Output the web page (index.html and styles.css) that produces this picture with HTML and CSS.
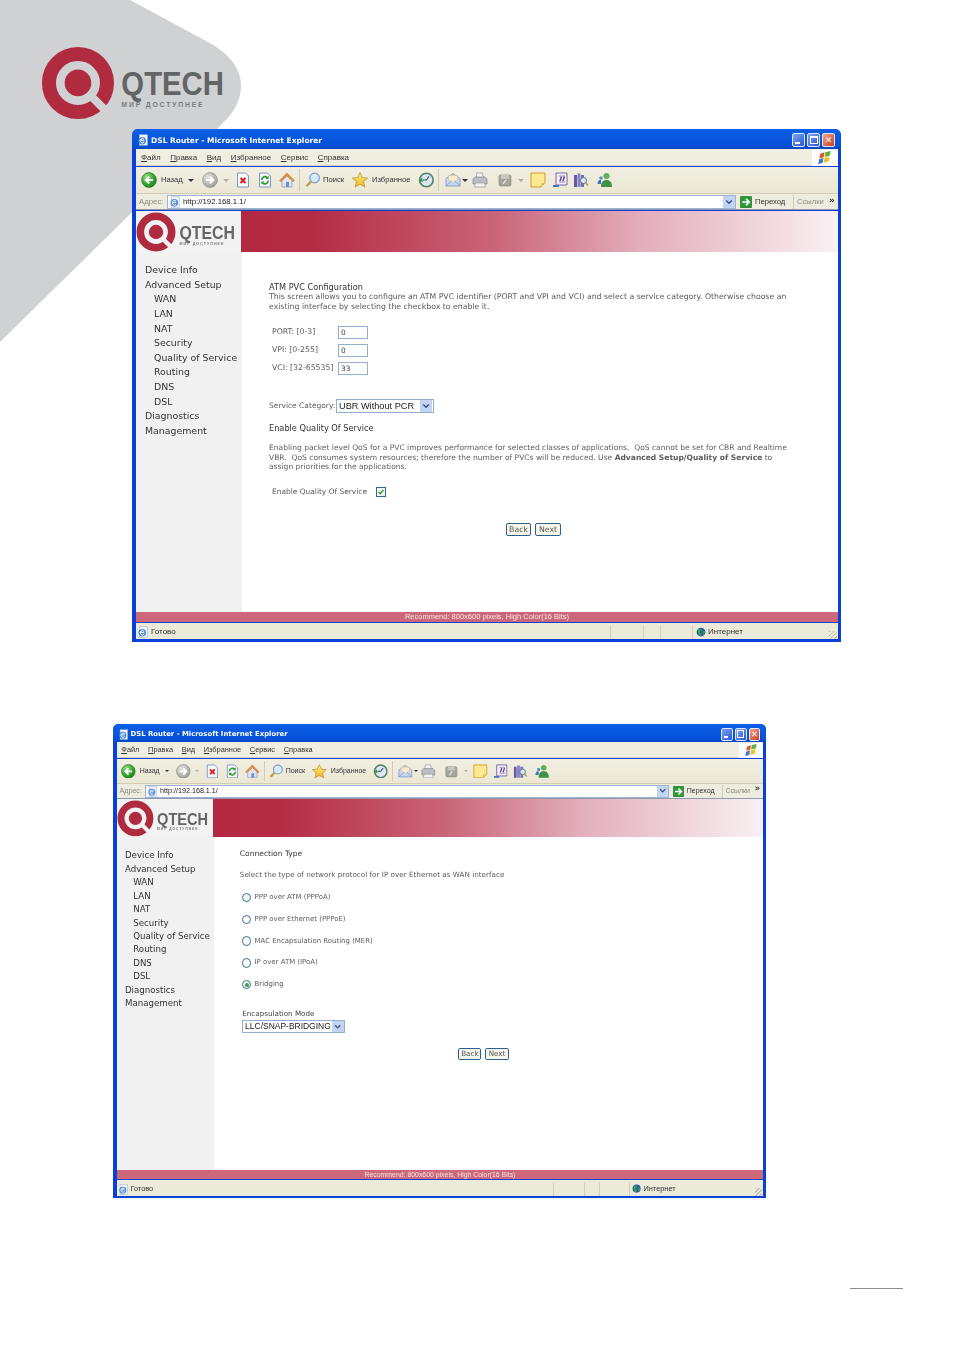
FILE: index.html
```html
<!DOCTYPE html>
<html lang="en">
<head>
<meta charset="utf-8">
<title>DSL Router manual page</title>
<link rel="stylesheet" href="styles.css">
</head>
<body>
<svg class="defs" aria-hidden="true">
  <defs>
    <radialGradient id="gGreen" cx=".35" cy=".3" r=".8"><stop offset="0" stop-color="#9be08a"/><stop offset=".55" stop-color="#3aa832"/><stop offset="1" stop-color="#1c7a1e"/></radialGradient>
    <radialGradient id="gGray" cx=".35" cy=".3" r=".8"><stop offset="0" stop-color="#e4e4df"/><stop offset="1" stop-color="#9a9a94"/></radialGradient>
    <linearGradient id="gStar" x1="0" y1="0" x2="0" y2="1"><stop offset="0" stop-color="#fff08a"/><stop offset="1" stop-color="#eeb422"/></linearGradient>
    <symbol id="logo" viewBox="0 0 105 41">
      <circle cx="20" cy="21" r="15.7" fill="none" stroke="#b02a40" stroke-width="7.6"/>
      <circle cx="20" cy="21" r="7.2" fill="#b02a40"/>
      <path d="M27 28 L38 39" stroke="currentColor" stroke-width="4.4" fill="none"/>
      <text x="43.5" y="27.8" class="logo-q" textLength="55.500" lengthAdjust="spacingAndGlyphs">QTECH</text>
      <text x="43.5" y="34" class="logo-s" textLength="44" lengthAdjust="spacing">МИР ДОСТУПНЕЕ</text>
    </symbol>
    <symbol id="i-back" viewBox="0 0 16 16"><circle cx="8" cy="8" r="7.4" fill="url(#gGreen)" stroke="#1f7a22" stroke-width=".7"/><path d="M12 8H5.5M8.2 4.6 4.8 8l3.4 3.4" fill="none" stroke="#fff" stroke-width="2"/></symbol>
    <symbol id="i-fwd" viewBox="0 0 16 16"><circle cx="8" cy="8" r="7.4" fill="url(#gGray)" stroke="#8c8c86" stroke-width=".7"/><path d="M4 8h6.5M7.8 4.6 11.2 8l-3.4 3.4" fill="none" stroke="#fff" stroke-width="2"/></symbol>
    <symbol id="i-stop" viewBox="0 0 16 16"><path d="M2.5 1h8l3 3v11h-11z" fill="#f6f8fd" stroke="#7e97c8"/><path d="M5.5 6l5 5M10.5 6l-5 5" stroke="#d8211a" stroke-width="2"/></symbol>
    <symbol id="i-refresh" viewBox="0 0 16 16"><path d="M2.5 1h8l3 3v11h-11z" fill="#f6f8fd" stroke="#7e97c8"/><path d="M4.8 8a3.3 3.3 0 0 1 5.8-2.2M11.2 8.5a3.3 3.3 0 0 1-5.8 2.2" fill="none" stroke="#2c9e2f" stroke-width="1.7"/><path d="M11.6 3.6v3.3H8.4zM4.4 12.6V9.4h3.2z" fill="#2c9e2f"/></symbol>
    <symbol id="i-home" viewBox="0 0 16 16"><path d="M3 8v7h10V8L8 3.5z" fill="#dfe6f2" stroke="#8896b4" stroke-width=".7"/><path d="M.6 8.6 8 1l7.4 7.6-1.4 1L8 3.7 2 9.6z" fill="#e8923a" stroke="#b8651e" stroke-width=".5"/><path d="M7 10h3v5H7z" fill="#6d8fd0"/></symbol>
    <symbol id="i-search" viewBox="0 0 16 16"><path d="M6 9.6 1.6 14" stroke="#c99a3e" stroke-width="2.4"/><circle cx="9.6" cy="6" r="4.8" fill="#d6e8fb" stroke="#7f9cc6" stroke-width="1.2"/><path d="M7 5a3 3 0 0 1 3-2" stroke="#fff" fill="none"/></symbol>
    <symbol id="i-star" viewBox="0 0 16 16"><path d="M8 .6l2.2 5 5.4.5-4.1 3.6 1.3 5.4L8 12.2l-4.8 2.9 1.3-5.4L.4 6.1l5.4-.5z" fill="url(#gStar)" stroke="#b88a1c" stroke-width=".7"/></symbol>
    <symbol id="i-hist" viewBox="0 0 16 16"><circle cx="8.4" cy="8" r="6.8" fill="#dbe6ef" stroke="#4d7f62" stroke-width="1.6"/><path d="M8.4 8 11 4.4M8.4 8H5" stroke="#36506e" stroke-width="1.1"/><path d="M.6 9 4 5.6 5 10z" fill="#2f9e36"/></symbol>
    <symbol id="i-mail" viewBox="0 0 16 16"><path d="M1 6.5 8 1.5l7 5V14H1z" fill="#c8d8f2" stroke="#7b93c0" stroke-width=".8"/><path d="M3.5 7.5V3.5h9v4L8 10.5z" fill="#f8eccd" stroke="#d6b88a" stroke-width=".5"/><path d="M1 14l5.5-5M15 14 9.5 9" stroke="#7b93c0" stroke-width=".8"/></symbol>
    <symbol id="i-print" viewBox="0 0 16 16"><path d="M4.5 1h6l1 5h-7z" fill="#f3f3f3" stroke="#9a9a9a" stroke-width=".7"/><path d="M1 7l2-2h10l2 2v5H1z" fill="#b9bec6" stroke="#7c828c" stroke-width=".7"/><path d="M3.5 11h9l1 4h-11z" fill="#f2f2f2" stroke="#9a9a9a" stroke-width=".7"/></symbol>
    <symbol id="i-edit" viewBox="0 0 16 16"><rect x="2" y="3" width="12" height="11" rx="1.5" fill="#a5a59c" stroke="#85857c" stroke-width=".6"/><path d="M4 3h8v4H4z" fill="#c6c6bd"/><path d="M6 12 9 8" stroke="#f0f0e8" stroke-width="1.2"/></symbol>
    <symbol id="i-note" viewBox="0 0 16 16"><path d="M1 1h14v10l-4 4H1z" fill="#fdea90" stroke="#d69a2a"/><path d="M15 11h-4v4z" fill="#e8c25a"/></symbol>
    <symbol id="i-one" viewBox="0 0 16 16"><path d="M4 1h11v12H4z" fill="#f1eef8" stroke="#7c64a8"/><path d="M7 4h6M7 10h6" stroke="#9c8cc0"/><path d="M8 9l1.5-4.5M11 9l1.5-4.5" stroke="#5c3e90" stroke-width="1.4"/><path d="M1 13h6v2H1z" fill="#3f74c8"/></symbol>
    <symbol id="i-books" viewBox="0 0 16 16"><path d="M1 3h3v12H1z" fill="#6a5aa8"/><path d="M4.5 1.5h3V15h-3z" fill="#8e7cc8"/><path d="M8 3h3v12H8z" fill="#5a7ab8"/><circle cx="10.5" cy="8.5" r="3" fill="#d6eaf8" stroke="#55708f"/><path d="M12.5 10.5l2.5 3" stroke="#c89a3e" stroke-width="1.7"/></symbol>
    <symbol id="i-msn" viewBox="0 0 16 16"><circle cx="9.5" cy="4" r="3" fill="#5fae5a"/><path d="M4 15c0-5 2-7 5.5-7S15 10 15 15z" fill="#3f9048"/><circle cx="4" cy="6" r="1.8" fill="#5b8ed8"/><path d="M.5 12c0-3 1.4-4.3 3.5-4.3L4 12z" fill="#3f74c8"/></symbol>
    <symbol id="i-flag" viewBox="0 0 16 16"><path d="M2.5 3 7.5 1.5 6.5 7 1.5 8.5z" fill="#e2572a"/><path d="M8.500 1.300 14.500 0l-1.200 5.500-5.700 1.300z" fill="#5eb43a"/><path d="M1.300 9.500 6.300 8 5.300 13.500.3 15z" fill="#3a78d8"/><path d="M7.400 7.900 13.100 6.600 12 12l-5.700 1.400z" fill="#f2c218"/></symbol>
    <symbol id="i-ie" viewBox="0 0 16 16"><rect x="3" y="1" width="11" height="14" fill="#eef3fb" stroke="#9bb0d0" stroke-width=".7"/><circle cx="7" cy="9" r="5" fill="#4d8ad8"/><path d="M4.5 8.5h5M9.5 11a3 3 0 1 1 0-4" fill="none" stroke="#fff" stroke-width="1.3"/></symbol>
    <symbol id="i-go" viewBox="0 0 16 16"><rect x=".5" y=".5" width="15" height="15" rx="1" fill="#2c9a36" stroke="#1a7426"/><path d="M3 8h8M8 3.8 12.2 8 8 12.200" fill="none" stroke="#fff" stroke-width="2.2"/></symbol>
    <symbol id="i-globe" viewBox="0 0 16 16"><circle cx="8" cy="8" r="7" fill="#2a54b8"/><path d="M4 3c3-1 5 0 5 2s-3 1-3 3 3 1 3 3-2 3-3 3-2-4-3-6 0-4 1-5zM11 6c2 0 3 1 3 3s-1 3-2 3-1-2-1-3z" fill="#3aa83a"/></symbol>
    <symbol id="i-chev" viewBox="0 0 8 8"><path d="M1.2 2.5 4 5.3l2.8-2.800" fill="none" stroke="#39548c" stroke-width="1.5"/></symbol>
  </defs>
</svg>

<svg class="swoosh" viewBox="0 0 242 343" aria-hidden="true"><path d="M0 0H130L208 42Q241 60 241 86Q241 106 222 124L0 342Z"/></svg>
<svg class="top-logo" aria-label="QTECH"><use href="#logo"/></svg>

<section class="win win-a">
  <header class="title">
    <svg class="ic-s"><use href="#i-ie"/></svg>
    <span class="title-text">DSL Router - Microsoft Internet Explorer</span>
    <span class="wbtn wmin"><i></i></span><span class="wbtn wmax"><i></i></span><span class="wbtn wclose">✕</span>
  </header>
  <nav class="menu">
    <span><u>Ф</u>айл</span><span><u>П</u>равка</span><span><u>В</u>ид</span><span><u>И</u>збранное</span><span><u>С</u>ервис</span><span><u>С</u>правка</span>
    <span class="flagbox"><svg class="ic-s"><use href="#i-flag"/></svg></span>
  </nav>
  <div class="toolbar">
    <svg class="ic"><use href="#i-back"/></svg><span class="lbl w21 ml4">Назад</span><span class="tri ml6"></span>
    <svg class="ic ml8"><use href="#i-fwd"/></svg><span class="tri dim ml5"></span>
    <svg class="ic ml6"><use href="#i-stop"/></svg><svg class="ic ml6"><use href="#i-refresh"/></svg><svg class="ic ml6"><use href="#i-home"/></svg>
    <span class="sep ml4"></span>
    <svg class="ic ml5"><use href="#i-search"/></svg><span class="lbl w21 ml2">Поиск</span>
    <svg class="ic ml8"><use href="#i-star"/></svg><span class="lbl w37 ml4">Избранное</span>
    <svg class="ic ml9"><use href="#i-hist"/></svg>
    <span class="sep ml4"></span>
    <svg class="ic ml6"><use href="#i-mail"/></svg><span class="tri ml1"></span>
    <svg class="ic ml4"><use href="#i-print"/></svg>
    <svg class="ic ml9"><use href="#i-edit"/></svg><span class="tri dim ml5"></span>
    <svg class="ic ml6"><use href="#i-note"/></svg><svg class="ic ml6"><use href="#i-one"/></svg><svg class="ic ml5"><use href="#i-books"/></svg><svg class="ic ml8"><use href="#i-msn"/></svg>
  </div>
  <div class="addr">
    <span class="addr-l">Адрес:</span>
    <div class="addr-box"><svg class="ic-s"><use href="#i-ie"/></svg><span class="url">http://192.168.1.1/</span><span class="drop"><svg class="chev"><use href="#i-chev"/></svg></span></div>
    <svg class="ic-s go"><use href="#i-go"/></svg><span class="go-l">Переход</span>
    <span class="sep2"></span><span class="links">Ссылки</span><span class="more">»</span>
  </div>
  <div class="band">
    <div class="band-logo"><svg class="logo-svg"><use href="#logo"/></svg></div>
    <div class="band-grad"></div>
  </div>
  <div class="body">
    <aside class="side">
      <a>Device Info</a><a>Advanced Setup</a><a class="sub">WAN</a><a class="sub">LAN</a><a class="sub">NAT</a><a class="sub">Security</a><a class="sub">Quality of Service</a><a class="sub">Routing</a><a class="sub">DNS</a><a class="sub">DSL</a><a>Diagnostics</a><a>Management</a>
    </aside>
    <main class="main main-a">
      <h2 class="hd">ATM PVC Configuration</h2>
      <p class="tx">This screen allows you to configure an ATM PVC identifier (PORT and VPI and VCI) and select a service category. Otherwise choose an<br>existing interface by selecting the checkbox to enable it.</p>
      <div class="rows">
        <div class="row"><span class="rl">PORT: [0-3]</span><div class="field">0</div></div>
        <div class="row"><span class="rl">VPI: [0-255]</span><div class="field">0</div></div>
        <div class="row"><span class="rl">VCI: [32-65535]</span><div class="field">33</div></div>
      </div>
      <div class="svc"><span class="svc-l">Service Category:</span><div class="sel sel-a"><span>UBR Without PCR</span><span class="drop"><svg class="chev"><use href="#i-chev"/></svg></span></div></div>
      <h2 class="hd hd2">Enable Quality Of Service</h2>
      <p class="tx tx2">Enabling packet level QoS for a PVC improves performance for selected classes of applications.&nbsp; QoS cannot be set for CBR and Realtime<br>VBR.&nbsp; QoS consumes system resources; therefore the number of PVCs will be reduced. Use <b>Advanced Setup/Quality of Service</b> to<br>assign priorities for the applications.</p>
      <div class="en"><span class="en-l">Enable Quality Of Service</span><span class="chk"><svg viewBox="0 0 10 10"><path d="M2 5l2 2.2L8 2.5" fill="none" stroke="#22a02a" stroke-width="1.6"/></svg></span></div>
      <div class="btns btns-a"><button class="btn">Back</button><button class="btn btn-n">Next</button></div>
    </main>
  </div>
  <div class="pink">Recommend: 800x600 pixels, High Color(16 Bits)</div>
  <footer class="status">
    <svg class="ic-s"><use href="#i-ie"/></svg><span class="st-t">Готово</span>
    <span class="cell c1"></span><span class="cell c2"></span><span class="cell c3"></span>
    <span class="cell zone"><svg class="ic-s"><use href="#i-globe"/></svg><span>Интернет</span></span>
    <span class="grip"></span>
  </footer>
</section>

<section class="win win-b">
  <header class="title">
    <svg class="ic-s"><use href="#i-ie"/></svg>
    <span class="title-text">DSL Router - Microsoft Internet Explorer</span>
    <span class="wbtn wmin"><i></i></span><span class="wbtn wmax"><i></i></span><span class="wbtn wclose">✕</span>
  </header>
  <nav class="menu">
    <span><u>Ф</u>айл</span><span><u>П</u>равка</span><span><u>В</u>ид</span><span><u>И</u>збранное</span><span><u>С</u>ервис</span><span><u>С</u>правка</span>
    <span class="flagbox"><svg class="ic-s"><use href="#i-flag"/></svg></span>
  </nav>
  <div class="toolbar">
    <svg class="ic"><use href="#i-back"/></svg><span class="lbl w21 ml4">Назад</span><span class="tri ml6"></span>
    <svg class="ic ml8"><use href="#i-fwd"/></svg><span class="tri dim ml5"></span>
    <svg class="ic ml6"><use href="#i-stop"/></svg><svg class="ic ml6"><use href="#i-refresh"/></svg><svg class="ic ml6"><use href="#i-home"/></svg>
    <span class="sep ml4"></span>
    <svg class="ic ml5"><use href="#i-search"/></svg><span class="lbl w21 ml2">Поиск</span>
    <svg class="ic ml8"><use href="#i-star"/></svg><span class="lbl w37 ml4">Избранное</span>
    <svg class="ic ml9"><use href="#i-hist"/></svg>
    <span class="sep ml4"></span>
    <svg class="ic ml6"><use href="#i-mail"/></svg><span class="tri ml1"></span>
    <svg class="ic ml4"><use href="#i-print"/></svg>
    <svg class="ic ml9"><use href="#i-edit"/></svg><span class="tri dim ml5"></span>
    <svg class="ic ml6"><use href="#i-note"/></svg><svg class="ic ml6"><use href="#i-one"/></svg><svg class="ic ml5"><use href="#i-books"/></svg><svg class="ic ml8"><use href="#i-msn"/></svg>
  </div>
  <div class="addr">
    <span class="addr-l">Адрес:</span>
    <div class="addr-box"><svg class="ic-s"><use href="#i-ie"/></svg><span class="url">http://192.168.1.1/</span><span class="drop"><svg class="chev"><use href="#i-chev"/></svg></span></div>
    <svg class="ic-s go"><use href="#i-go"/></svg><span class="go-l">Переход</span>
    <span class="sep2"></span><span class="links">Ссылки</span><span class="more">»</span>
  </div>
  <div class="band">
    <div class="band-logo"><svg class="logo-svg"><use href="#logo"/></svg></div>
    <div class="band-grad"></div>
  </div>
  <div class="body">
    <aside class="side">
      <a>Device Info</a><a>Advanced Setup</a><a class="sub">WAN</a><a class="sub">LAN</a><a class="sub">NAT</a><a class="sub">Security</a><a class="sub">Quality of Service</a><a class="sub">Routing</a><a class="sub">DNS</a><a class="sub">DSL</a><a>Diagnostics</a><a>Management</a>
    </aside>
    <main class="main main-b">
      <h2 class="hd">Connection Type</h2>
      <p class="tx tx-sel">Select the type of network protocol for IP over Ethernet as WAN interface</p>
      <div class="radios">
        <label class="radio"><span class="rb"></span>PPP over ATM (PPPoA)</label>
        <label class="radio"><span class="rb"></span>PPP over Ethernet (PPPoE)</label>
        <label class="radio"><span class="rb"></span>MAC Encapsulation Routing (MER)</label>
        <label class="radio"><span class="rb"></span>IP over ATM (IPoA)</label>
        <label class="radio"><span class="rb on"></span>Bridging</label>
      </div>
      <div class="enc">Encapsulation Mode</div>
      <div class="sel sel-b"><span>LLC/SNAP-BRIDGING</span><span class="drop"><svg class="chev"><use href="#i-chev"/></svg></span></div>
      <div class="btns btns-b"><button class="btn">Back</button><button class="btn btn-n">Next</button></div>
    </main>
  </div>
  <div class="pink">Recommend: 800x600 pixels, High Color(16 Bits)</div>
  <footer class="status">
    <svg class="ic-s"><use href="#i-ie"/></svg><span class="st-t">Готово</span>
    <span class="cell c1"></span><span class="cell c2"></span><span class="cell c3"></span>
    <span class="cell zone"><svg class="ic-s"><use href="#i-globe"/></svg><span>Интернет</span></span>
    <span class="grip"></span>
  </footer>
</section>

<div class="page-rule"></div>
</body>
</html>
```

FILE: styles.css
```css
* { box-sizing: border-box; }
html, body { margin: 0; padding: 0; background: #fff; }
body { position: relative; width: 955px; height: 1350px; overflow: hidden; font-family: "DejaVu Sans", sans-serif; }
.defs { position: absolute; width: 0; height: 0; }

.swoosh { position: absolute; left: 0; top: 0; width: 242px; height: 343px; fill: #cfd1d3; }
.top-logo { position: absolute; left: 41px; top: 44px; width: 194px; height: 76px; color: #cfd1d3; }
.logo-q { font: 700 17.5px "Liberation Sans", sans-serif; fill: #636466; }
.logo-s { font: 700 3.7px "Liberation Sans", sans-serif; fill: #7a7b7d; }

.win { position: absolute; width: 709px; display: flex; flex-direction: column; padding: 0 3px 3px 4px; border-radius: 6px 6px 0 0; background: #0a40d8; filter: blur(.45px); overflow: hidden; }
.win-a { left: 132px; top: 129px; height: 513px; }
.win-b { zoom: .921; left: 122.7px; top: 786.1px; height: 515px; }

.title { height: 20px; margin: 0 -3px 0 -4px; padding: 2px 5px 0; display: flex; align-items: center; flex: none; background: linear-gradient(#0a5fe8 0, #0a5ae0 30%, #0450d8 85%, #0b46c0 100%); }
.title-text { margin: 1px 0 0 2px; flex: 1; color: #fff; font: 700 7.5px/18px "DejaVu Sans", sans-serif; }
.ic-s { width: 12px; height: 12px; display: block; flex: none; }
.wbtn { width: 13px; height: 14px; margin-left: 2px; border: 1px solid #dfe8fb; border-radius: 2px; background: linear-gradient(135deg, #7ea2f0, #2c58d2); color: #fff; position: relative; display: flex; align-items: center; justify-content: center; font: 700 9px/1 "DejaVu Sans", sans-serif; }
.wmin i { position: absolute; left: 2px; bottom: 2px; width: 5px; height: 2px; background: #fff; }
.wmax i { width: 8px; height: 8px; border: 1px solid #fff; border-top-width: 2px; }
.wclose { margin-right: 1px; background: linear-gradient(135deg, #f0a58c, #c9401c); }

.menu { height: 17px; padding: 1px 0 0 5px; display: flex; align-items: center; gap: 9.5px; flex: none; background: #f0eee0; border-bottom: 1px solid #d8d4c0; font: 8px/16px "Liberation Sans", sans-serif; color: #333; }
.menu u { text-decoration: underline; }
.flagbox { margin-left: auto; width: 26px; height: 16px; background: #fff; display: flex; align-items: center; justify-content: center; }
.flagbox .ic-s { width: 14px; height: 14px; }

.toolbar { height: 27px; padding: 0 0 0 5px; margin-top: 1px; display: flex; align-items: center; flex: none; background: linear-gradient(#f1efe3, #ebe7d3); border-bottom: 1px solid #d2ceb8; }
.ic { width: 16px; height: 16px; display: block; flex: none; }
.lbl { flex: none; font: 7.6px/12px "Liberation Sans", sans-serif; color: #333; white-space: nowrap; }
.w21 { width: 21px; }
.w37 { width: 37px; }
.tri { flex: none; width: 0; height: 0; border: 3px solid transparent; border-top-color: #333; border-bottom-width: 0; }
.tri.dim { border-top-color: #b0ada0; }
.sep { flex: none; width: 1px; height: 22px; background: #cfcbb5; }
.ml1 { margin-left: 1px; }
.ml2 { margin-left: 2px; }
.ml4 { margin-left: 4px; }
.ml5 { margin-left: 5px; }
.ml6 { margin-left: 6px; }
.ml8 { margin-left: 8px; }
.ml9 { margin-left: 9px; }

.addr { height: 16px; padding-top: 1px; display: flex; align-items: center; flex: none; background: #eeecdf; border-bottom: 1px solid #8d99ad; font: 7.8px/14px "Liberation Sans", sans-serif; color: #333; }
.addr-l { width: 31px; padding-left: 3px; color: #8d8d85; }
.addr-box { width: 569px; height: 14px; padding-left: 1px; display: flex; align-items: center; background: #fff; border: 1px solid #9fb5d8; color: #222; }
.url { margin-left: 2px; flex: 1; font-size: 7.8px; }
.drop { width: 12px; height: 12px; flex: none; display: flex; align-items: center; justify-content: center; background: #c3d3f2; }
.chev { width: 8px; height: 8px; display: block; }
.go { margin-left: 4px; }
.go-l { margin-left: 3px; width: 38px; font-size: 7.6px; }
.sep2 { width: 1px; height: 14px; background: #cfcbb5; }
.links { margin-left: 3px; width: 32px; color: #8d8d85; font-size: 7.6px; }
.more { font: 700 9px/10px "DejaVu Sans", sans-serif; margin-top: -5px; }

.band { height: 41px; margin-top: 1px; display: flex; flex: none; background: #fff; }
.band-logo { width: 105px; height: 41px; color: #f2f2f2; background: #f2f2f2; flex: none; }
.logo-svg { width: 105px; height: 41px; display: block; }
.band-grad { flex: 1; background: linear-gradient(90deg, #b22840 0, #b42c44 12%, #c96478 42%, #e3aebb 67%, #f9f1f3 100%); }

.body { flex: 1; min-height: 0; display: flex; background: #fff; }
.side { width: 106px; flex: none; padding: 11px 0 0 9px; background: #f1f1f1; display: flex; flex-direction: column; }
.win-b .side { padding-top: 13px; }
.side a { height: 14.64px; font: 9.4px/14.64px "DejaVu Sans", sans-serif; color: #333; white-space: nowrap; }
.side .sub { padding-left: 9px; }

.main { flex: 1; min-width: 0; font: 7.75px/9.7px "DejaVu Sans", sans-serif; color: #5b5b5b; white-space: nowrap; }
.main-a { padding: 30px 20px 0 27px; }
.main-b { padding: 12.4px 20px 0 27.7px; }
.hd { margin: 0; font: 400 8.2px/10px "DejaVu Sans", sans-serif; color: #333; }
.tx { margin: 0; }
.rows { margin: 11.6px 0 0 3px; }
.row { height: 18px; display: flex; align-items: center; }
.rl { width: 66px; flex: none; white-space: nowrap; }
.field { width: 30px; height: 13px; padding-left: 2px; border: 1px solid #8fb0d0; background: #fff; font: 7.4px/11px "DejaVu Sans", sans-serif; color: #444; }
.svc { margin-top: 21.5px; height: 14px; display: flex; align-items: center; }
.svc-l { width: 67px; flex: none; white-space: nowrap; font-size: 7.5px; }
.sel { height: 14px; display: flex; align-items: center; justify-content: space-between; padding: 0 0 0 2px; background: #fff; border: 1px solid #8fb0d0; font: 9.2px/12px "Liberation Sans", sans-serif; color: #222; white-space: nowrap; }
.sel-a { width: 98px; }
.sel-a .drop { margin-right: 1px; }
.sel-b { width: 111px; margin-left: 2.7px; margin-top: 2.7px; }
.hd2 { margin-top: 10.5px; }
.tx2 { margin-top: 10px; font-size: 7.55px; }
.en { margin: 14px 0 0 3px; height: 12px; display: flex; align-items: center; font-size: 7.45px; }
.en-l { width: 104px; flex: none; }
.chk { width: 10px; height: 10px; display: block; border: 1px solid #2a6a94; background: #f6f6f0; }
.chk svg { display: block; width: 8px; height: 8px; }
.btns { display: flex; }
.btns-a { margin: 24.5px 0 0 237px; }
.btns-b { margin: 16.3px 0 0 237.3px; }
.btn { width: 25px; height: 13px; padding: 0; background: #f6f5ec; border: 1px solid #2d5f8e; border-radius: 2px; font: 7.8px/11px "DejaVu Sans", sans-serif; color: #555; }
.btn-n { margin-left: 4px; width: 26px; }

.tx-sel { margin-top: 12.8px; line-height: 10px; font-size: 7.85px; }
.radios { margin: 14px 0 0 2.7px; display: flex; flex-direction: column; gap: 11.8px; font-size: 7.56px; }
.radio { height: 12px; display: flex; align-items: center; gap: 3.3px; white-space: nowrap; }
.rb { width: 10px; height: 10px; flex: none; border: 1px solid #3f6f9e; border-radius: 50%; background: #fafaf5; display: flex; align-items: center; justify-content: center; }
.rb.on::after { content: ""; width: 4px; height: 4px; border-radius: 50%; background: #3fa84a; }
.enc { margin: 20px 0 0 2.7px; font: 7.8px/10px "DejaVu Sans", sans-serif; color: #444; }

.pink { height: 10px; flex: none; margin-bottom: 1px; background: #cc6879; color: #f6e6e8; text-align: center; font: 7.5px/10px "Liberation Sans", sans-serif; }
.status { height: 16px; flex: none; padding: 2px 0 0 1px; display: flex; align-items: center; background: #ecead9; font: 8px/14px "Liberation Sans", sans-serif; color: #333; }
.win-b .status { height: 17px; padding-top: 3px; }
.st-t { margin-left: 2px; width: 459px; }
.cell { height: 14px; border-left: 1px solid #d2cfbb; flex: none; }
.c1 { width: 33px; }
.c2 { width: 17px; }
.c3 { width: 32px; }
.zone { width: 130px; display: flex; align-items: center; gap: 2px; padding-left: 3px; }
.zone .ic-s { width: 10px; height: 10px; }
.grip { margin-left: auto; margin-right: 1px; width: 8px; height: 8px; align-self: flex-end; background: repeating-linear-gradient(135deg, #c4c1ac 0 1px, transparent 1px 3px); }

.page-rule { position: absolute; left: 850px; top: 1288px; width: 53px; height: 1px; background: #8d8d8d; }
```
